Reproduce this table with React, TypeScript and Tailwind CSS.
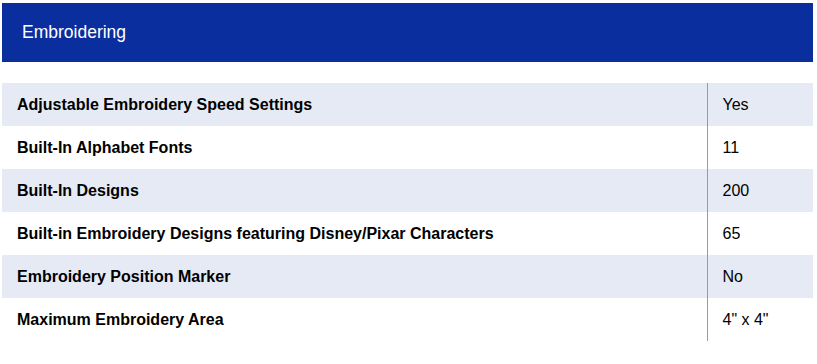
const rows: [string, string][] = [
  ['Adjustable Embroidery Speed Settings', 'Yes'],
  ['Built-In Alphabet Fonts', '11'],
  ['Built-In Designs', '200'],
  ['Built-in Embroidery Designs featuring Disney/Pixar Characters', '65'],
  ['Embroidery Position Marker', 'No'],
  ['Maximum Embroidery Area', '4" x 4"'],
]

export default function App() {
  return (
    <div className="min-h-screen bg-white px-[2px] pt-[3px] font-['Liberation_Sans',Arial,sans-serif] text-black">
      <div className="flex h-[59px] w-[811px] items-center bg-[#0b2e9f] px-5">
        <h2 className="text-[17.5px] text-white">Embroidering</h2>
      </div>

      <table className="mt-[21px] w-[811px] border-collapse">
        <tbody>
          {rows.map(([label, value], i) => (
            <tr key={label} className={i % 2 === 0 ? 'bg-[#e6eaf4]' : 'bg-white'}>
              <td className="h-[43px] pl-[15px] text-[16px] font-bold">{label}</td>
              <td className="h-[43px] w-[106px] border-l border-[#9a9a9a] pl-[15px] text-[16px]">
                {value}
              </td>
            </tr>
          ))}
        </tbody>
      </table>
    </div>
  )
}
